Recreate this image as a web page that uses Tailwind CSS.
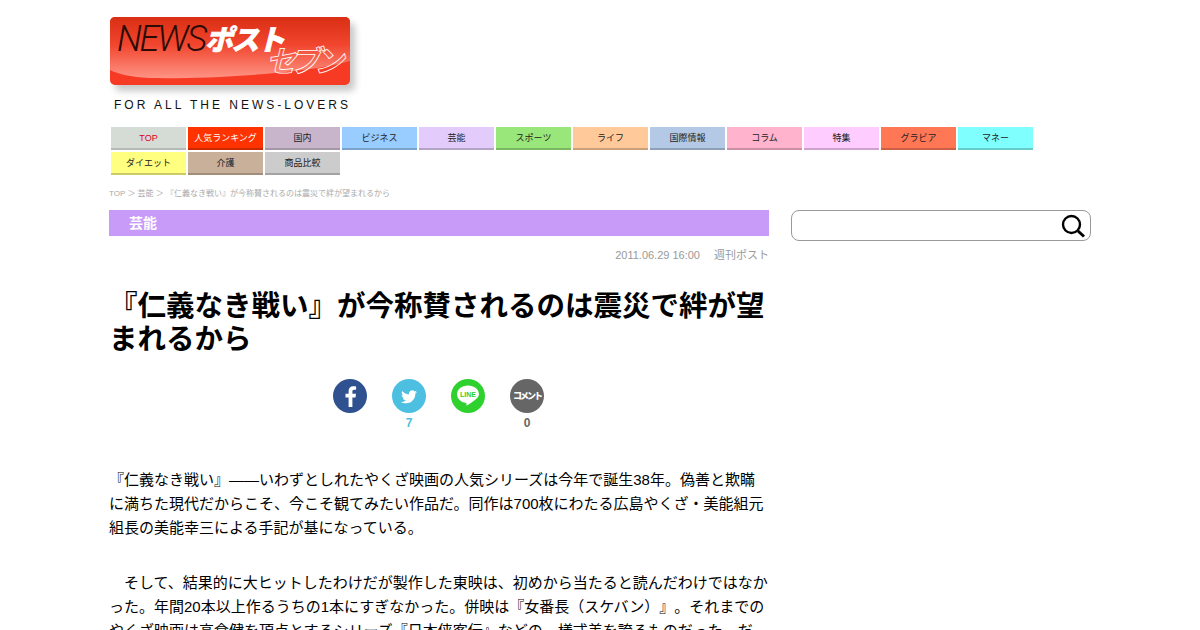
<!DOCTYPE html>
<html lang="ja">
<head>
    <meta charset="UTF-8">
    <title>『仁義なき戦い』が今称賛されるのは震災で絆が望まれるから</title>
    <script src="https://cdn.jsdelivr.net/npm/@tailwindcss/browser@4"></script>
</head>
<body class="bg-white text-black font-['Liberation_Sans','Noto_Sans_CJK_JP',sans-serif] [text-spacing-trim:space-all] h-[630px] overflow-hidden">
    <div class="w-[982px] ml-[109px]">
        <!-- Header -->
        <header class="pt-[17px] pl-px">
            <div class="relative w-[240px] h-[68px] rounded-[5px] overflow-hidden bg-[#f63a24] shadow-[5px_6px_7px_rgba(0,0,0,0.22)]">
                <svg class="absolute inset-0 w-[240px] h-[68px]" viewBox="0 0 240 68">
                    <defs><linearGradient id="gloss" x1="0" y1="0" x2="0" y2="1"><stop offset="0" stop-color="#d92f14"/><stop offset="0.45" stop-color="#f1452e"/><stop offset="1" stop-color="#ff9384"/></linearGradient></defs>
                    <path d="M0 0H240V44C190 58 90 62 40 61C20 60 8 57 0 53Z" fill="url(#gloss)"/>
                </svg>
                <span class="absolute left-[7px] top-[2px] text-[36px] leading-[40px] italic font-light text-[#2a0b06] tracking-[-2.2px] font-['Roboto']">NEWS</span>
                <span class="absolute left-[95px] top-[6px] text-[28px] leading-[36px] font-black italic text-white tracking-[-2px] [-webkit-text-stroke:0.6px_white]">ポスト</span>
                <span class="absolute left-[156px] top-[26px] text-[30px] leading-[38px] italic font-bold text-transparent tracking-[-6px] [-webkit-text-stroke:0.8px_white]">セブン</span>
            </div>
            <p class="mt-[13px] ml-[4px] text-[12px] leading-[14px] tracking-[3px] text-[#111]">FOR ALL THE NEWS-LOVERS</p>
        </header>

        <!-- Category nav -->
        <nav class="mt-[15px] ml-[2px] w-[930px] flex flex-wrap gap-x-[2px] gap-y-[2px] text-[9px] text-[#222]">
            <a class="w-[75px] h-[23px] pt-[2px] flex items-center justify-center border-b-2 bg-[#d5dbd5] border-[#b5bab5] text-[#e0001b]">TOP</a>
            <a class="w-[75px] h-[23px] pt-[2px] flex items-center justify-center border-b-2 bg-[#ff3300] border-[#c92800] text-white">人気ランキング</a>
            <a class="w-[75px] h-[23px] pt-[2px] flex items-center justify-center border-b-2 bg-[#c8b4cb] border-[#a596a8]">国内</a>
            <a class="w-[75px] h-[23px] pt-[2px] flex items-center justify-center border-b-2 bg-[#99ccff] border-[#7ba3cc]">ビジネス</a>
            <a class="w-[75px] h-[23px] pt-[2px] flex items-center justify-center border-b-2 bg-[#e3ccfb] border-[#b5a3c8]">芸能</a>
            <a class="w-[75px] h-[23px] pt-[2px] flex items-center justify-center border-b-2 bg-[#99e67a] border-[#7ab862]">スポーツ</a>
            <a class="w-[75px] h-[23px] pt-[2px] flex items-center justify-center border-b-2 bg-[#ffc999] border-[#cca17a]">ライフ</a>
            <a class="w-[75px] h-[23px] pt-[2px] flex items-center justify-center border-b-2 bg-[#b3c9e6] border-[#8fa1b8]">国際情報</a>
            <a class="w-[75px] h-[23px] pt-[2px] flex items-center justify-center border-b-2 bg-[#ffb3cc] border-[#cc8fa3]">コラム</a>
            <a class="w-[75px] h-[23px] pt-[2px] flex items-center justify-center border-b-2 bg-[#ffccff] border-[#cca3cc]">特集</a>
            <a class="w-[75px] h-[23px] pt-[2px] flex items-center justify-center border-b-2 bg-[#ff7755] border-[#cc5f44]">グラビア</a>
            <a class="w-[75px] h-[23px] pt-[2px] flex items-center justify-center border-b-2 bg-[#80ffff] border-[#66cccc]">マネー</a>
            <a class="w-[75px] h-[23px] pt-[2px] flex items-center justify-center border-b-2 bg-[#ffff80] border-[#cccc66]">ダイエット</a>
            <a class="w-[75px] h-[23px] pt-[2px] flex items-center justify-center border-b-2 bg-[#c9b09b] border-[#a18d7c]">介護</a>
            <a class="w-[75px] h-[23px] pt-[2px] flex items-center justify-center border-b-2 bg-[#cccccc] border-[#a3a3a3]">商品比較</a>
        </nav>

        <!-- Breadcrumb -->
        <p class="mt-[13px] h-[12px] text-[8px] leading-[12px] text-[#aaa]">TOP ＞ 芸能 ＞ 『仁義なき戦い』が今称賛されるのは震災で絆が望まれるから</p>

        <div class="mt-[10px] flex gap-[22px]">
            <!-- Article -->
            <main class="w-[660px]">
                <h2 class="h-[26px] pl-[20px] bg-[#c89bf8] text-white text-[14px] leading-[26px] font-bold">芸能</h2>
                <p class="mt-[11px] text-right text-[11px] leading-[16px] text-[#999]">2011.06.29 16:00<span class="ml-[14px]">週刊ポスト</span></p>
                <h1 class="mt-[27px] text-[28.5px] leading-[33px] font-bold">『仁義なき戦い』が今称賛されるのは震災で絆が望まれるから</h1>

                <div class="mt-[23px] ml-[224px] flex gap-[25px] text-[12px] leading-[16px] font-bold text-center">
                    <div class="w-[34px]">
                        <svg class="w-[34px] h-[34px]" viewBox="0 0 34 34"><circle cx="17" cy="17" r="17" fill="#2f5190"/><path d="M19.400 28v-9.500h3.100l.5-3.700h-3.600v-2.300c0-1.100.3-1.800 1.800-1.800h1.900V7.400c-.4 0-1.500-.2-2.800-.2-2.800 0-4.700 1.700-4.700 4.800v2.800h-3.100v3.700h3.100V28z" fill="#fff"/></svg>
                    </div>
                    <div class="w-[34px] text-[#4dbfe0]">
                        <svg class="w-[34px] h-[34px]" viewBox="0 0 34 34"><circle cx="17" cy="17" r="17" fill="#4dbfe0"/><path transform="translate(3.400 3.700) scale(0.8)" d="M27 11.500c-.7.300-1.500.5-2.300.6.800-.5 1.500-1.300 1.800-2.200-.8.500-1.700.8-2.600 1a4.100 4.100 0 0 0-7 3.700c-3.400-.2-6.400-1.800-8.400-4.300-1.100 1.900-.5 4.300 1.300 5.500-.7 0-1.300-.2-1.900-.5 0 2 1.400 3.700 3.300 4.100-.6.200-1.200.2-1.800.1.500 1.600 2 2.800 3.800 2.800A8.200 8.200 0 0 1 7 24c1.900 1.200 4 1.800 6.300 1.800 7.600 0 11.900-6.400 11.600-12.200.8-.5 1.500-1.300 2.100-2.100z" fill="#fff"/></svg>
                        <div class="mt-[2px]">7</div>
                    </div>
                    <div class="w-[34px]">
                        <svg class="w-[34px] h-[34px]" viewBox="0 0 34 34"><circle cx="17" cy="17" r="17" fill="#2ed12e"/><path d="M17 6.500c-6.100 0-11 3.900-11 8.800 0 4.400 3.800 8 9 8.700.6.100.6.600.4 1.700-.1.700.3.900 1 .5 2.800-1.600 9.400-5.700 10.900-8.600.4-.8.700-1.600.7-2.300C28 10.400 23.100 6.500 17 6.500z" fill="#fff"/><text x="17" y="18" text-anchor="middle" font-size="7" font-weight="700" fill="#2ed12e" font-family="Liberation Sans">LINE</text></svg>
                    </div>
                    <div class="w-[34px] text-[#666]">
                        <div class="w-[34px] h-[34px] rounded-full bg-[#666] flex items-center justify-center overflow-hidden text-white text-[9px] leading-none font-black tracking-[-2px] whitespace-nowrap">コメント</div>
                        <div class="mt-[2px]">0</div>
                    </div>
                </div>

                <div class="mt-[37px] text-[15px] leading-[24px]">
                    <p>『仁義なき戦い』――いわずとしれたやくざ映画の人気シリーズは今年で誕生38年。偽善と欺瞞に満ちた現代だからこそ、今こそ観てみたい作品だ。同作は700枚にわたる広島やくざ・美能組元組長の美能幸三による手記が基になっている。</p>
                    <p class="mt-[31px]">　そして、結果的に大ヒットしたわけだが製作した東映は、初めから当たると読んだわけではなかった。年間20本以上作るうちの1本にすぎなかった。併映は『女番長（スケバン）』。それまでのやくざ映画は高倉健を頂点とするシリーズ『日本侠客伝』などの、様式美を誇るものだった。だ</p>
                </div>
            </main>

            <!-- Sidebar search -->
            <aside class="w-[300px]">
                <div class="h-[31px] flex items-center justify-end pr-[5px] border border-[#999] rounded-[8px]">
                    <svg class="w-[24px] h-[24px]" viewBox="0 0 24 24" fill="none" stroke="#000"><circle cx="10.500" cy="10.500" r="8.500" stroke-width="2.400"/><path d="M17 17l6 5.500" stroke-width="3"/></svg>
                </div>
            </aside>
        </div>
    </div>
</body>
</html>
